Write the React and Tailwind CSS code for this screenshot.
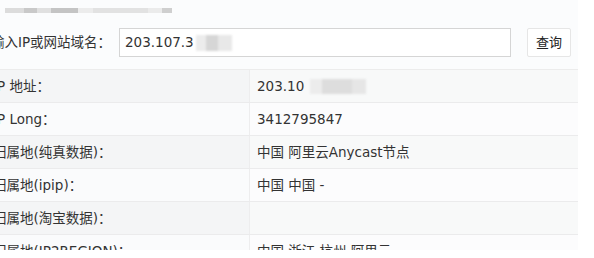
import React from 'react';

const rows = [
  { label: 'IP 地址：', value: '203.10', blur: true },
  { label: 'IP Long：', value: '3412795847' },
  { label: '归属地(纯真数据)：', value: '中国 阿里云Anycast节点' },
  { label: '归属地(ipip)：', value: '中国 中国 -' },
  { label: '归属地(淘宝数据)：', value: '' },
  { label: '归属地(IP2REGION)：', value: '中国 浙江 杭州 阿里云' },
];

export default function App() {
  return (
    <div
      className="w-[594px] h-[258px] bg-white overflow-hidden text-[#333] text-[13.5px]"
      style={{ fontFamily: '"DejaVu Sans", "Noto Sans CJK SC", sans-serif' }}
    >
      <div className="h-[250px] overflow-hidden bg-[#fbfcfd] -ml-[12px] w-[590px]">
        {/* blurred breadcrumb */}
        <div className="flex items-center h-[20px] pl-[17px] pt-[1px] blur-[0.6px]">
          <div className="w-[19px] h-[5px] bg-[#dcdcdc]" />
          <div className="w-[13px] h-[5px] bg-[#c9c9c9]" />
          <div className="w-[14px] h-[5px] bg-[#e0e0e0]" />
          <div className="w-[27px] h-[5px] bg-[#c4c4c4]" />
          <div className="w-[15px] h-[5px] bg-[#ececec]" />
          <div className="w-[55px] h-[5px] bg-[#e2e2e2]" />
          <div className="w-[14px] h-[5px] bg-[#ebebeb]" />
          <div className="w-[10px] h-[5px] bg-[#cfcfcf]" />
        </div>

        <div className="flex items-center h-[49px] pt-[2px] pb-[6px]">
          <span className="ml-[3px] w-[128px] shrink-0">输入IP或网站域名：</span>
          <div className="w-[392px] h-[29px] border border-[#d5d5d5] bg-white flex items-center pl-[5px]">
            <span>203.107.3</span>
            <div className="ml-[2px] w-[42px] h-[16px] flex blur-[1px]">
              <div className="w-[10px] bg-[#ececec]" />
              <div className="w-[12px] bg-[#d6d6d6]" />
              <div className="w-[14px] bg-[#e8e8e8]" />
            </div>
          </div>
          <button className="ml-[16px] w-[44px] h-[29px] border border-[#e6e6e6] bg-white text-[#222] text-[13px] rounded-[2px]">
            查询
          </button>
        </div>

        <div className="border-t border-[#ececec]">
          {rows.map((row, i) => (
            <div
              key={row.label}
              className={`flex h-[33px] border-b border-[#ebebec] ${i % 2 === 0 ? 'bg-[#f4f5f6]' : 'bg-[#fafbfc]'}`}
            >
              <div className="w-[262px] shrink-0 flex items-center pl-[5px] border-r border-[#ededee]">
                {row.label}
              </div>
              <div className="flex-1 flex items-center pl-[7px] bg-white/40">
                <span>{row.value}</span>
                {row.blur && (
                  <div className="ml-[6px] w-[58px] h-[15px] flex blur-[1px]">
                    <div className="w-[12px] bg-[#ececec]" />
                    <div className="w-[30px] bg-[#dddddd]" />
                    <div className="w-[14px] bg-[#e6e6e6]" />
                  </div>
                )}
              </div>
            </div>
          ))}
        </div>
      </div>
    </div>
  );
}
